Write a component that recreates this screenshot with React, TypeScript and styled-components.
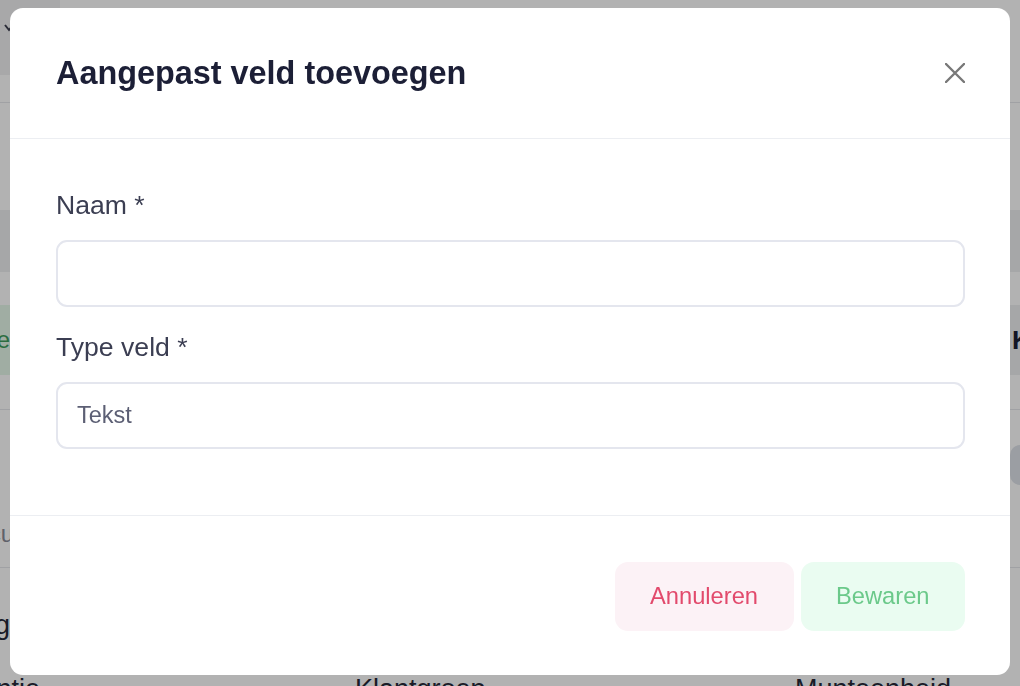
import React from "react"
import styled, { createGlobalStyle } from "styled-components"

const GlobalStyle = createGlobalStyle`
  html, body {
    margin: 0;
    padding: 0;
    background: #ffffff;
    font-family: "Liberation Sans", Arial, Helvetica, sans-serif;
  }
  * { box-sizing: border-box; }
`

// ---------- page behind the dialog ----------

const Page = styled.div`
  height: 760px;
  overflow: hidden;
  background: #ffffff;
  color: #23253a;
`

const TopBar = styled.div`
  height: 103px;
  display: flex;
  border-bottom: 1px solid #e6e7eb;
`

const NavTile = styled.div`
  width: 60px;
  height: 75px;
  background: #f1f1f3;
  display: flex;
  padding: 24px 0 0 4px;
`

const Spacer = styled.div<{ h: number }>`
  height: ${(p) => p.h}px;
`

const Band = styled.div<{ h: number; bg?: string; line?: boolean; align?: string }>`
  height: ${(p) => p.h}px;
  background: ${(p) => p.bg || "transparent"};
  border-bottom: ${(p) => (p.line ? "1px solid #e6e7eb" : "none")};
  display: flex;
  align-items: ${(p) => p.align || "center"};
  justify-content: space-between;
`

const Clip = styled.div<{ w: number; top?: number }>`
  width: ${(p) => p.w}px;
  margin-top: ${(p) => p.top || 0}px;
  overflow: hidden;
  display: flex;
  justify-content: flex-end;
  white-space: nowrap;
`

const StatusBadge = styled.div`
  height: 70px;
  width: 10px;
  background: #e6f8ea;
  color: #3f9d5d;
  font-size: 24px;
  display: flex;
  align-items: center;
  justify-content: flex-end;
  overflow: hidden;
  white-space: nowrap;
`

const BoldCell = styled.div`
  width: 10px;
  overflow: hidden;
  font-size: 26px;
  font-weight: 700;
  color: #1c1f36;
  padding-left: 2px;
  white-space: nowrap;
`

const MutedText = styled.span`
  font-size: 24px;
  color: #8a8c98;
`

const PillStub = styled.div`
  width: 10px;
  height: 40px;
  background: #dfe3ea;
  border-radius: 20px 0 0 20px;
  margin-top: 35px;
`

const CellText = styled.span`
  font-size: 27px;
  color: #262838;
`

const BottomRow = styled.div`
  display: grid;
  grid-template-columns: 355px 440px 1fr;
  padding-top: 6px;
`

// ---------- dialog ----------

const Overlay = styled.div`
  position: fixed;
  inset: 0;
  background: rgba(0, 0, 0, 0.3);
  display: flex;
  justify-content: center;
  align-items: flex-start;
  padding-top: 8px;
`

const Modal = styled.div`
  width: 1000px;
  background: #ffffff;
  border-radius: 13px;
  overflow: hidden;
`

const Header = styled.div`
  height: 131px;
  display: flex;
  align-items: center;
  justify-content: space-between;
  padding: 0 45px 0 46px;
  border-bottom: 1px solid #eceef2;
`

const Title = styled.h2`
  margin: 0;
  font-size: 32.4px;
  font-weight: 700;
  color: #1c1f36;
`

const CloseButton = styled.button`
  border: none;
  background: none;
  padding: 0;
  width: 20px;
  height: 20px;
  display: flex;
  cursor: pointer;
`

const Body = styled.div`
  padding: 48px 45px 66px 46px;
`

const Field = styled.div<{ last?: boolean }>`
  margin-bottom: ${(p) => (p.last ? 0 : 22)}px;
`

const Label = styled.label`
  display: block;
  font-size: 26.6px;
  line-height: 36px;
  color: #3b3e52;
  margin-bottom: 17px;
`

const Input = styled.div`
  height: 67px;
  border: 2px solid #e4e6ee;
  border-radius: 11px;
  padding: 0 19px;
  display: flex;
  align-items: center;
  font-size: 23.5px;
  color: #5c5f74;
`

const Footer = styled.div`
  border-top: 1px solid #eceef2;
  padding: 46px 45px 44px 46px;
  display: flex;
  justify-content: flex-end;
  gap: 7px;
`

const Button = styled.button<{ tone: "danger" | "success" }>`
  height: 69px;
  padding: 0 35.5px;
  border: none;
  border-radius: 13px;
  font-family: inherit;
  font-size: 23.7px;
  cursor: pointer;
  background: ${(p) => (p.tone === "danger" ? "#fcf2f6" : "#eafcf1")};
  color: ${(p) => (p.tone === "danger" ? "#e24a6c" : "#6bc98a")};
`

const CloseIcon = () => (
  <svg width="20" height="20" viewBox="0 0 20 20">
    <path d="M1 1 L19 19 M19 1 L1 19" stroke="#787878" strokeWidth="2.4" strokeLinecap="round" />
  </svg>
)

const Chevron = () => (
  <svg width="10" height="8" viewBox="0 0 10 8">
    <path d="M1 1 L5 6 L9 1" stroke="#3c3e4e" strokeWidth="2" fill="none" />
  </svg>
)

export default function App() {
  return (
    <>
      <GlobalStyle />
      <Page>
        <TopBar>
          <NavTile>
            <Chevron />
          </NavTile>
        </TopBar>
        <Spacer h={107} />
        <Band h={62} bg="#eeeff1" />
        <Spacer h={33} />
        <Band h={70} bg="#eeeff1">
          <StatusBadge>Actieve</StatusBadge>
          <BoldCell>Klant</BoldCell>
        </Band>
        <Band h={35} line />
        <Band h={158} line align="flex-start">
          <Clip w={14} top={110}>
            <MutedText>Docu</MutedText>
          </Clip>
          <PillStub />
        </Band>
        <Band h={100} align="flex-start">
          <Clip w={10} top={42}>
            <CellText>Categorieg</CellText>
          </Clip>
        </Band>
        <BottomRow>
          <Clip w={40}>
            <CellText>Referentie</CellText>
          </Clip>
          <CellText>Klantgroep</CellText>
          <CellText>Munteenheid</CellText>
        </BottomRow>
      </Page>

      <Overlay>
        <Modal>
          <Header>
            <Title>Aangepast veld toevoegen</Title>
            <CloseButton aria-label="Sluiten">
              <CloseIcon />
            </CloseButton>
          </Header>
          <Body>
            <Field>
              <Label>Naam *</Label>
              <Input />
            </Field>
            <Field last>
              <Label>Type veld *</Label>
              <Input>Tekst</Input>
            </Field>
          </Body>
          <Footer>
            <Button tone="danger">Annuleren</Button>
            <Button tone="success">Bewaren</Button>
          </Footer>
        </Modal>
      </Overlay>
    </>
  )
}
